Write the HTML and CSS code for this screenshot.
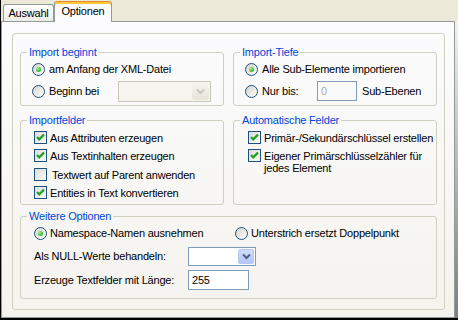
FILE: index.html
```html
<!DOCTYPE html>
<html lang="de">
<head>
    <meta charset="UTF-8">
    <meta name="viewport" content="width=device-width, initial-scale=1.0">
    <title>Optionen</title>
    <link rel="stylesheet" href="styles.css">
</head>
<body>

    <div class="dialog">
        <!-- Tab strip -->
        <div class="tabs">
            <div class="tab">Auswahl</div>
            <div class="tab active">Optionen</div>
        </div>

        <div class="pane-wrap">
            <div class="pane">
                <div class="outer">
                    <div class="grid">

                        <fieldset class="group">
                            <legend>Import beginnt</legend>
                            <div class="opts">
                                <div class="row"><span class="radio on"></span>am Anfang der XML-Datei</div>
                                <div class="row">
                                    <span class="radio"></span>Beginn bei
                                    <span class="combo disabled">
                                        <span class="drop">
                                            <svg width="9" height="7" viewBox="0 0 9 7"><path d="M1 1.5 L4.5 5 L8 1.5" fill="none" stroke="#c9c7ba" stroke-width="2"/></svg>
                                        </span>
                                    </span>
                                </div>
                            </div>
                        </fieldset>

                        <fieldset class="group">
                            <legend>Import-Tiefe</legend>
                            <div class="opts">
                                <div class="row"><span class="radio on"></span>Alle Sub-Elemente importieren</div>
                                <div class="row">
                                    <span class="radio"></span><span class="lbl">Nur bis:</span>
                                    <span class="field disabled">0</span>Sub-Ebenen
                                </div>
                            </div>
                        </fieldset>

                        <fieldset class="group">
                            <legend>Importfelder</legend>
                            <div class="checks">
                                <div class="crow"><span class="check on"><svg width="11" height="11" viewBox="0 0 11 11"><path d="M2 5 L4.2 7.4 L9 2.6" fill="none" stroke="#21a121" stroke-width="2.2"/></svg></span><span>Aus Attributen erzeugen</span></div>
                                <div class="crow"><span class="check on"><svg width="11" height="11" viewBox="0 0 11 11"><path d="M2 5 L4.2 7.4 L9 2.6" fill="none" stroke="#21a121" stroke-width="2.2"/></svg></span><span>Aus Textinhalten erzeugen</span></div>
                                <div class="crow"><span class="check"></span><span class="pad">Textwert auf Parent anwenden</span></div>
                                <div class="crow"><span class="check on"><svg width="11" height="11" viewBox="0 0 11 11"><path d="M2 5 L4.2 7.4 L9 2.6" fill="none" stroke="#21a121" stroke-width="2.2"/></svg></span><span>Entities in Text konvertieren</span></div>
                            </div>
                        </fieldset>

                        <fieldset class="group">
                            <legend>Automatische Felder</legend>
                            <div class="checks right">
                                <div class="crow"><span class="check on"><svg width="11" height="11" viewBox="0 0 11 11"><path d="M2 5 L4.2 7.4 L9 2.6" fill="none" stroke="#21a121" stroke-width="2.2"/></svg></span><span>Primär-/Sekundärschlüssel erstellen</span></div>
                                <div class="crow"><span class="check on"><svg width="11" height="11" viewBox="0 0 11 11"><path d="M2 5 L4.2 7.4 L9 2.6" fill="none" stroke="#21a121" stroke-width="2.2"/></svg></span><span>Eigener Primärschlüsselzähler für jedes Element</span></div>
                            </div>
                        </fieldset>

                    </div>

                    <fieldset class="group wide">
                        <legend>Weitere Optionen</legend>
                        <div class="more">
                            <div class="row">
                                <span class="ritem"><span class="radio on"></span>Namespace-Namen ausnehmen</span>
                                <span class="ritem"><span class="radio"></span>Unterstrich ersetzt Doppelpunkt</span>
                            </div>
                            <div class="frow">
                                <span class="flabel">Als NULL-Werte behandeln:</span>
                                <span class="combo on">
                                    <span class="drop">
                                        <svg width="9" height="7" viewBox="0 0 9 7"><path d="M1 1.5 L4.5 5 L8 1.5" fill="none" stroke="#4d6185" stroke-width="2"/></svg>
                                    </span>
                                </span>
                            </div>
                            <div class="frow">
                                <span class="flabel">Erzeuge Textfelder mit Länge:</span>
                                <span class="field on">255</span>
                            </div>
                        </div>
                    </fieldset>
                </div>
            </div>
        </div>
    </div>

</body>
</html>
```

FILE: styles.css
```css
body {
    margin: 0;
    background: #ece9d8;
    font-family: "Liberation Sans", Arial, sans-serif;
    font-size: 11px;
    letter-spacing: -0.2px;
    color: #000;
}

.dialog {
    width: 458px;
    height: 320px;
    box-sizing: border-box;
    border-left: 1px solid #000;
    border-bottom: 2px solid #000;
    display: flex;
    flex-direction: column;
}

/* tabs */
.tabs {
    height: 21px;
    flex: none;
    display: flex;
    align-items: flex-end;
    padding-left: 2px;
}

.tab {
    width: 51px;
    height: 17px;
    box-sizing: border-box;
    border: 1px solid #919b9c;
    border-bottom: none;
    border-radius: 3px 3px 0 0;
    background: linear-gradient(#fefefe, #ecebe6);
    text-align: center;
    line-height: 16px;
}

.tab.active {
    width: 58px;
    height: 21px;
    margin-bottom: -1px;
    position: relative;
    z-index: 1;
    border-top-color: #e68b2c;
    background: #fcfcfe;
    box-shadow: inset 0 2px 0 #ffc73c;
    line-height: 18px;
}

/* page */
.pane-wrap {
    flex: 1;
    display: flex;
    padding-right: 3px;
    background: linear-gradient(#f2f1ec, #7d7d7d);
}

.pane {
    flex: 1;
    border: 1px solid #919b9c;
    background: linear-gradient(#fcfcfe, #f4f3ee);
    padding: 11px 0 0 10px;
}

.outer {
    width: 433px;
    height: 277px;
    box-sizing: border-box;
    border: 1px solid #d0d0bf;
    border-radius: 3px;
    padding: 12px 7px 0;
}

.grid {
    display: grid;
    grid-template-columns: 204px 204px;
    grid-template-rows: 60px 91px;
    column-gap: 9px;
    row-gap: 8px;
}

.group {
    margin: 0;
    padding: 0;
    min-width: 0;
    box-sizing: border-box;
    border: 1px solid #d0d0bf;
    border-radius: 3px;
}

.group legend {
    margin-left: 6px;
    padding: 0 2px;
    color: #0046d5;
    line-height: 12px;
}

.wide {
    margin-top: 5px;
    height: 89px;
}

/* rows */
.opts {
    padding: 0 12px 0 11px;
}

.row {
    height: 22px;
    display: flex;
    align-items: center;
}

.lbl {
    width: 55px;
}

.checks {
    padding: 3px 0 0 13px;
}

.checks.right {
    padding-left: 14px;
}

.crow {
    display: flex;
    align-items: flex-start;
    min-height: 18.4px;
    box-sizing: border-box;
    padding-top: 3px;
    line-height: 12px;
}

.crow .pad {
    padding-left: 2px;
}

.more {
    padding-left: 13px;
}

.ritem {
    width: 201px;
    display: flex;
    align-items: center;
}

.frow {
    height: 24px;
    display: flex;
    align-items: center;
}

.flabel {
    width: 154px;
}

/* controls */
.radio {
    width: 13px;
    height: 13px;
    flex: none;
    box-sizing: border-box;
    border: 1px solid #1c5180;
    border-radius: 50%;
    background: linear-gradient(135deg, #d6d3c8, #fff);
    margin-right: 4px;
    position: relative;
}

.radio.on::after {
    content: "";
    position: absolute;
    left: 3px;
    top: 3px;
    width: 5px;
    height: 5px;
    border-radius: 50%;
    background: radial-gradient(circle at 35% 35%, #b4f0b0, #3cbf38 55%, #21a121);
}

.ritem .radio {
    margin-right: 3px;
}

.check {
    width: 13px;
    height: 13px;
    flex: none;
    box-sizing: border-box;
    border: 1px solid #1c5180;
    background: linear-gradient(135deg, #dcdcd7, #fbfbf9);
    margin: -1px 3px 0 0;
    display: flex;
}

.combo {
    display: flex;
    justify-content: flex-end;
    box-sizing: border-box;
    padding: 1px;
}

.combo.disabled {
    margin-left: auto;
    width: 93px;
    height: 21px;
    border: 1px solid #c9c7ba;
    background: #f6f5f0;
}

.combo.on {
    width: 68px;
    height: 19px;
    border: 1px solid #7f9db9;
    background: #fff;
}

.drop {
    width: 16px;
    display: flex;
    align-items: center;
    justify-content: center;
    border-radius: 2px;
}

.combo.disabled .drop {
    width: 17px;
    background: linear-gradient(#f4f3ee, #e6e4da);
}

.combo.on .drop {
    box-sizing: border-box;
    border: 1px solid #b5c8f4;
    background: linear-gradient(#cfdcfd, #b2c6f6);
}

.field {
    height: 20px;
    box-sizing: border-box;
    border: 1px solid #7f9db9;
    padding-left: 3px;
    line-height: 18px;
}

.field.disabled {
    width: 40px;
    margin-right: 5px;
    color: #aca899;
}

.field.on {
    width: 61px;
    background: #fff;
}
```
